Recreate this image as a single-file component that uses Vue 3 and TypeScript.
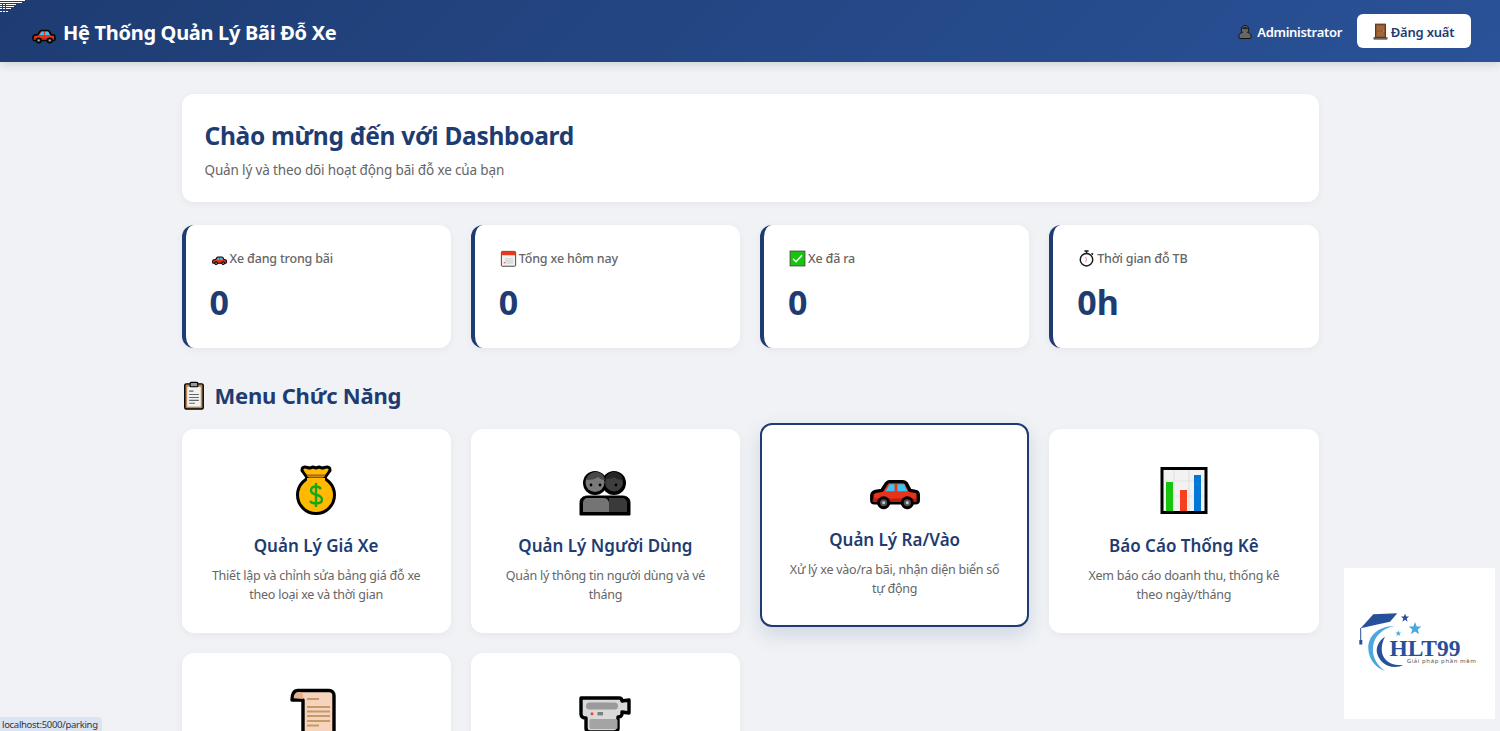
<script setup lang="ts">
interface Stat { icon: string; label: string; value: string }
interface MenuItem { icon: string; title?: string; desc?: string; active?: boolean }

const stats: Stat[] = [
  { icon: 'car', label: 'Xe đang trong bãi', value: '0' },
  { icon: 'calendar', label: 'Tổng xe hôm nay', value: '0' },
  { icon: 'check', label: 'Xe đã ra', value: '0' },
  { icon: 'watch', label: 'Thời gian đỗ TB', value: '0h' },
]

const menu: MenuItem[] = [
  { icon: 'bag', title: 'Quản Lý Giá Xe', desc: 'Thiết lập và chỉnh sửa bảng giá đỗ xe theo loại xe và thời gian' },
  { icon: 'busts', title: 'Quản Lý Người Dùng', desc: 'Quản lý thông tin người dùng và vé tháng' },
  { icon: 'car', title: 'Quản Lý Ra/Vào', desc: 'Xử lý xe vào/ra bãi, nhận diện biển số tự động', active: true },
  { icon: 'chart', title: 'Báo Cáo Thống Kê', desc: 'Xem báo cáo doanh thu, thống kê theo ngày/tháng' },
  { icon: 'scroll' },
  { icon: 'camera' },
]
</script>

<template>
  <svg class="defs" aria-hidden="true">
    <defs>
      <symbol id="car" viewBox="0 0 64 64">
        <g transform="translate(2.450 11.700) scale(.91 .88)">
          <path d="M10 41c-2 0-3-1-3-3v-5c0-3 1-4 4-5l7-1 5-8c1-1 2-2 3-2h15c2 0 3 1 4 2l4 8 6 1c2 0 3 2 3 4v6c0 2-1 3-3 3z" fill="#e8331c" stroke="#000" stroke-width="3.800" stroke-linejoin="round"/>
          <path d="M22 28l4-7c0-1 1-1 2-1h4v8zM35 20h6c1 0 2 0 2 1l3 7H35z" fill="#35c6f4"/>
          <path d="M8 36h48v4H8z" fill="#b5200f"/>
          <circle cx="20" cy="41" r="5.600" fill="#555" stroke="#000" stroke-width="3.400"/>
          <circle cx="46" cy="41" r="5.600" fill="#555" stroke="#000" stroke-width="3.400"/>
          <circle cx="20" cy="41" r="1.600" fill="#ccc"/>
          <circle cx="46" cy="41" r="1.600" fill="#ccc"/>
        </g>
      </symbol>
      <symbol id="bag" viewBox="0 0 64 64">
        <circle cx="32" cy="34" r="18.500" fill="#ffb900" stroke="#000" stroke-width="3"/>
        <path d="M21 6c2 0 3 1 5 1l3-1 3 1 3-1 3 1c2 0 3-1 5-1 3 0 4 3 2 5l-5 7H24l-5-7c-2-2-1-5 2-5z" fill="#ffb900" stroke="#000" stroke-width="3" stroke-linejoin="round"/>
        <path d="M23 17h18v3H23z" fill="#ffb900"/>
        <path d="M23 14.500h18" stroke="#a8692a" stroke-width="2.200"/>
        <path d="M37 28c-1-1.500-2.500-2.500-5-2.500-3 0-5 1.500-5 4 0 5.500 11 3 11 9 0 2.500-2.500 4-6 4-3 0-5-1-6-2.500M32 22v24" fill="none" stroke="#16a61c" stroke-width="2.400"/>
      </symbol>
      <symbol id="busts" viewBox="0 0 64 64">
        <circle cx="41" cy="22" r="12"/>
        <circle cx="22" cy="22" r="12"/>
        <path d="M7 54V42c0-5 3-7 8-7h34c5 0 8 2 8 7v12z" stroke="#000" stroke-width="1"/>
        <circle cx="41" cy="21.500" r="9" fill="#3e3e3e"/>
        <circle cx="22" cy="21.500" r="9.500" fill="#7a7a7a"/>
        <path d="M13 19c2-6 6-8 10-8 5 0 8 3 9 8-3 0-5-1-7-3-2 2-6 3-12 3z" fill="#484848"/>
        <path d="M32 18c2-5 5-7 9-7 5 0 8 3 9 8-4 0-7-1-9-3-1 1-4 2-9 2z" fill="#262626"/>
        <path d="M36 37h13c3 0 5 2 5 5v9H36z" fill="#3a3a3a"/>
        <path d="M10 51v-9c0-3 2-5 5-5h16c3 0 5 3 5 5v9z" fill="#747474"/>
        <circle cx="18" cy="24" r="1.400"/>
        <circle cx="27" cy="24" r="1.400"/>
        <circle cx="43" cy="24" r="1.400"/>
      </symbol>
      <symbol id="chart" viewBox="0 0 64 64">
        <rect x="10" y="7.500" width="44" height="44" fill="#f2f2f2" stroke="#000" stroke-width="3"/>
        <path d="M22 9v41M37 9v41M12 20h40M12 35h40" stroke="#e2e2e2" stroke-width="1.200"/>
        <rect x="14" y="21" width="7" height="29" fill="#16c60c"/>
        <rect x="28" y="29" width="7" height="21" fill="#f7401f"/>
        <rect x="42" y="14" width="7" height="36" fill="#0078d7"/>
      </symbol>
      <symbol id="scroll" viewBox="0 0 64 64">
        <path d="M14 5.500h31c3 0 5 2 5 5V50c0 3 2 4 6 4v8H19V15H8c0-6 2-9.500 6-9.500z" fill="#f6d3bb" stroke="#000" stroke-width="3.400" stroke-linejoin="round"/>
        <path d="M19 14V10c0-2-2-3-4-3-3 0-5 3-5 6z" fill="#e6b08a"/>
        <path d="M23 14h12M23 22h23M23 26.500h23M23 31h23M23 36h23M23 40.500h12" stroke="#c49a6c" stroke-width="2"/>
      </symbol>
      <symbol id="camera" viewBox="0 0 64 64">
        <path d="M8 13h38c2 0 3 1 3 3l7-1v13l-7-1v2c0 2-2 3-4 3v11c0 3-2 4-4 4H17c-3 0-4-2-4-4V33c-3 0-5-1-5-4z" fill="#d9d9d9" stroke="#000" stroke-width="3.400" stroke-linejoin="round"/>
        <rect x="13" y="17.500" width="32" height="7" rx="3.500" fill="#9a9a9a"/>
        <circle cx="19" cy="28.700" r="1.500" fill="#f7401f"/>
        <rect x="24.500" y="27" width="5.500" height="3.400" fill="#7d7d7d"/>
        <rect x="16.500" y="34" width="28" height="10" rx="1.500" fill="#a4a4a4"/>
      </symbol>
      <symbol id="calendar" viewBox="0 0 64 64">
        <rect x="8" y="8" width="48" height="50" rx="3" fill="#f2f2f2" stroke="#333" stroke-width="3"/>
        <rect x="9" y="9" width="46" height="12" fill="#e8391f"/>
        <path d="M20 30h28v20H20z" fill="#ddd"/>
        <circle cx="18" cy="46" r="2.400" fill="#e8391f"/>
      </symbol>
      <symbol id="check" viewBox="0 0 64 64">
        <rect x="7" y="7" width="50" height="50" fill="#16c60c" stroke="#444" stroke-width="3"/>
        <path d="M17 33l10 10 20-22" fill="none" stroke="#fff" stroke-width="5"/>
      </symbol>
      <symbol id="watch" viewBox="0 0 64 64">
        <circle cx="32" cy="36" r="21" fill="#fff" stroke="#1a1a1a" stroke-width="5"/>
        <path d="M25 7h14M32 7v8M49 14l5 5" stroke="#1a1a1a" stroke-width="5"/>
        <path d="M32 36l-3-10M32 36l-3 8" stroke="#e0607a" stroke-width="2.400"/>
      </symbol>
      <symbol id="clipboard" viewBox="0 0 64 64">
        <rect x="14" y="8" width="38" height="52" rx="3" fill="#b98a58" stroke="#000" stroke-width="3"/>
        <rect x="19" y="14" width="28" height="41" fill="#f2f2f2"/>
        <path d="M23 23h9M23 30h20M23 36h20M23 42h20M23 48h12" stroke="#666" stroke-width="2.200"/>
        <rect x="25" y="5" width="16" height="9" rx="2" fill="#9a9a9a" stroke="#000" stroke-width="2.400"/>
      </symbol>
      <symbol id="bust" viewBox="0 0 64 64">
        <path d="M32 6c9 0 15 7 15 16 0 5-2 9-5 12 9 2 14 6 14 12v8c0 3-2 4-4 4H12c-2 0-4-1-4-4v-8c0-6 5-10 14-12-3-3-5-7-5-12 0-9 6-16 15-16z" fill="#666" stroke="#111" stroke-width="4"/>
        <path d="M19 18c6-8 20-8 26 0-5 4-10 2-13 2-4 0-8 1-13-2z" fill="#222"/>
      </symbol>
      <symbol id="door" viewBox="0 0 64 64">
        <rect x="13" y="4" width="38" height="52" fill="#8e562e" stroke="#3d2413" stroke-width="3"/>
        <path d="M19 10h26v18H19zM19 32h26v18H19z" fill="#a5673a"/>
        <circle cx="44" cy="30" r="2" fill="#f1c64c"/>
        <rect x="7" y="55" width="50" height="6" fill="#666" stroke="#222" stroke-width="1.600"/>
      </symbol>
    </defs>
  </svg>

  <div class="page">
    <header class="topbar">
      <h1 class="brand">
        <svg class="e e-brand"><use href="#car" /></svg>
        <span>Hệ Thống Quản Lý Bãi Đỗ Xe</span>
      </h1>
      <div class="user-area">
        <span class="user">
          <svg class="e e-bust"><use href="#bust" /></svg>
          <span>Administrator</span>
        </span>
        <button class="logout" type="button">
          <svg class="e e-door"><use href="#door" /></svg>
          <span>Đăng xuất</span>
        </button>
      </div>
    </header>

    <main class="content">
      <section class="welcome">
        <h2>Chào mừng đến với Dashboard</h2>
        <p>Quản lý và theo dõi hoạt động bãi đỗ xe của bạn</p>
      </section>

      <section class="stats">
        <article v-for="s in stats" :key="s.label" class="stat">
          <div class="stat-label">
            <svg class="e e-stat"><use :href="'#' + s.icon" /></svg>
            <span>{{ s.label }}</span>
          </div>
          <div class="stat-value">{{ s.value }}</div>
        </article>
      </section>

      <h3 class="section-title">
        <svg class="e e-section"><use href="#clipboard" /></svg>
        <span>Menu Chức Năng</span>
      </h3>

      <section class="menu">
        <article v-for="m in menu" :key="m.icon" class="card" :class="{ active: m.active }">
          <svg class="e e-card"><use :href="'#' + m.icon" /></svg>
          <h4 v-if="m.title">{{ m.title }}</h4>
          <p v-if="m.desc">{{ m.desc }}</p>
        </article>
      </section>
    </main>

    <div class="logo-badge">
      <svg viewBox="0 0 151 151" width="151" height="151">
        <path d="M29.300 46.300L53.300 45.300 46 53.700 31 57 16.700 60.300z" fill="#27509b"/>
        <path d="M16.700 60v13" stroke="#27509b" stroke-width="1"/>
        <rect x="15.300" y="72" width="3" height="4.500" fill="#27509b"/>
        <path d="M61 45.500l1.100 3h3l-2.400 2 .9 3.200-2.600-1.900-2.600 1.900.9-3.200-2.400-2h3z" fill="#27509b"/>
        <path d="M71 54l1.700 4.400h4.600l-3.600 3 1.400 4.800-4.100-2.800-4.100 2.800 1.400-4.800-3.600-3h4.600z" fill="#4aa8df"/>
        <path d="M54.300 62.500l.8 2h2.100l-1.700 1.300.7 2.200-1.900-1.300-1.900 1.300.7-2.200-1.700-1.300h2.100z" fill="#4aa8df"/>
        <path d="M51 58C33 58 24 69 24.300 80.300 24.500 92 32 100 41 103 33 97 28 89 29 79 30 68 39 60 51 58z" fill="#4aa8df"/>
        <path d="M41 68.700C34 73 32 80 33 85c2 8 9 14 18 14 3 0 6-1 8.300-2-8 .5-15-1-19-7-4-6-3-14 .7-21.300z" fill="#27509b"/>
        <text x="45.500" y="87.700" class="logo-name">HLT99</text>
        <text x="62.700" y="95" class="logo-sub">Giải pháp phần mềm</text>
      </svg>
    </div>

    <svg class="glitch" width="26" height="13" viewBox="0 0 26 13">
      <path d="M0 .5h25M0 2.500h22M0 4.500h16M0 6.500h14M0 8.500h11M0 11.500h8" stroke="#fff" stroke-width="1.200"/>
      <path d="M2.500 4v8M5.500 4v8" stroke="#26457f" stroke-width="1"/>
    </svg>

    <div class="status">localhost:5000/parking</div>
  </div>
</template>

<style>
html, body {
  margin: 0;
  height: 731px;
  overflow: hidden;
  background: #f0f2f5;
}
</style>

<style scoped>
.defs { position: absolute; width: 0; height: 0; }
.page {
  position: relative;
  height: 731px;
  overflow: hidden;
  background: #f0f2f5;
  font-family: "Noto Sans", "Open Sans", sans-serif;
  color: #333;
}
.e { display: block; flex: none; }

.topbar {
  height: 62px;
  box-sizing: border-box;
  padding: 0 29px 0 29px;
  display: flex;
  align-items: center;
  justify-content: space-between;
  background: linear-gradient(135deg, #1e3c72 0%, #2a5298 100%);
  box-shadow: 0 2px 10px rgba(0, 0, 0, 0.15);
  color: #fff;
}
.brand {
  margin: 0;
  display: flex;
  align-items: center;
  gap: 4px;
  font-size: 20px;
  font-weight: 700;
  letter-spacing: -0.3px;
  line-height: 30px;
}
.brand span { padding-top: 3px; }
.e-brand { width: 30px; height: 30px; margin-top: 4px; }
.user-area { display: flex; align-items: center; gap: 15px; }
.user {
  display: flex;
  align-items: center;
  gap: 4px;
  font-size: 13px;
  font-weight: 600;
  letter-spacing: -0.3px;
  line-height: 20px;
}
.user span { padding-top: 2px; }
.e-bust { width: 16px; height: 16px; margin-top: 2px; }
.e-door { width: 17px; height: 17px; }
.logout {
  width: 114px;
  height: 34px;
  display: flex;
  align-items: center;
  justify-content: center;
  gap: 2px;
  border: 0;
  border-radius: 6px;
  background: #fff;
  color: #1e3c72;
  font: 600 13px "Noto Sans", sans-serif;
  letter-spacing: -0.2px;
  padding: 0 2px 0 0;
}
.logout span { padding-top: 1px; }

.content {
  width: 1137px;
  margin: 0 auto;
  padding-top: 32px;
}
.welcome {
  height: 108px;
  box-sizing: border-box;
  padding: 23px 23px;
  border-radius: 12px;
  background: #fff;
  box-shadow: 0 2px 8px rgba(0, 0, 0, 0.05);
}
.welcome h2 {
  margin: 0 0 5px;
  color: #1e3c72;
  font-size: 24.500px;
  line-height: 38px;
  font-weight: 700;
  letter-spacing: -0.3px;
}
.welcome p {
  margin: 0;
  color: #666;
  font-size: 13.500px;
  letter-spacing: -0.14px;
  line-height: 20px;
}

.stats {
  margin-top: 23px;
  display: grid;
  grid-template-columns: repeat(4, 1fr);
  gap: 20px;
}
.stat {
  height: 123px;
  box-sizing: border-box;
  padding: 24px;
  border-left: 4px solid #1e3c72;
  border-radius: 12px;
  background: #fff;
  box-shadow: 0 2px 8px rgba(0, 0, 0, 0.05);
}
.stat-label {
  display: flex;
  align-items: center;
  gap: 1px;
  color: #666;
  font-size: 12.500px;
  font-weight: 500;
  letter-spacing: -0.17px;
  line-height: 19px;
}
.e-stat { width: 19px; height: 19px; }
.stat-value {
  margin-top: 10px;
  color: #1e3c72;
  font-size: 34px;
  line-height: 48px;
  font-weight: 700;
}

.section-title {
  margin: 29px 0 16px;
  display: flex;
  align-items: center;
  gap: 6px;
  color: #1e3c72;
  font-size: 22px;
  font-weight: 700;
  letter-spacing: -0.2px;
  line-height: 36px;
}
.e-section { width: 31px; height: 31px; margin-left: -4px; }

.menu {
  display: grid;
  grid-template-columns: repeat(4, 1fr);
  gap: 20px;
}
.card {
  height: 204px;
  box-sizing: border-box;
  padding: 32px 26px;
  display: flex;
  flex-direction: column;
  align-items: center;
  text-align: center;
  border: 2px solid transparent;
  border-radius: 12px;
  background: #fff;
  box-shadow: 0 2px 8px rgba(0, 0, 0, 0.05);
}
.card.active {
  border-color: #1e3c72;
  transform: translateY(-6px);
  box-shadow: 0 8px 20px rgba(30, 60, 114, 0.15);
}
.e-card { width: 64px; height: 64px; margin-top: -2px; }
.card h4 {
  margin: 8px 0 7px;
  color: #1e3c72;
  font-size: 17px;
  line-height: 26px;
  font-weight: 600;
}
.card p {
  margin: 0;
  color: #666;
  font-size: 12.500px;
  letter-spacing: -0.24px;
  line-height: 19px;
}

.logo-badge {
  position: absolute;
  left: 1344px;
  top: 568px;
  width: 151px;
  height: 151px;
  background: #fff;
}
.logo-name {
  font: 700 23.500px "Liberation Serif", serif;
  fill: #27509b;
}
.logo-sub {
  font: 400 6px "Noto Sans", sans-serif;
  letter-spacing: 0.6px;
  fill: #555;
}
.glitch { position: absolute; left: 0; top: 0; }
.status {
  position: absolute;
  left: 0;
  bottom: 0;
  height: 14px;
  width: 102px;
  box-sizing: border-box;
  padding-left: 2px;
  border-top-right-radius: 4px;
  background: #dbe4f5;
  color: #333;
  font-size: 9.500px;
  letter-spacing: -0.3px;
  line-height: 15px;
  white-space: nowrap;
  overflow: hidden;
}
</style>
